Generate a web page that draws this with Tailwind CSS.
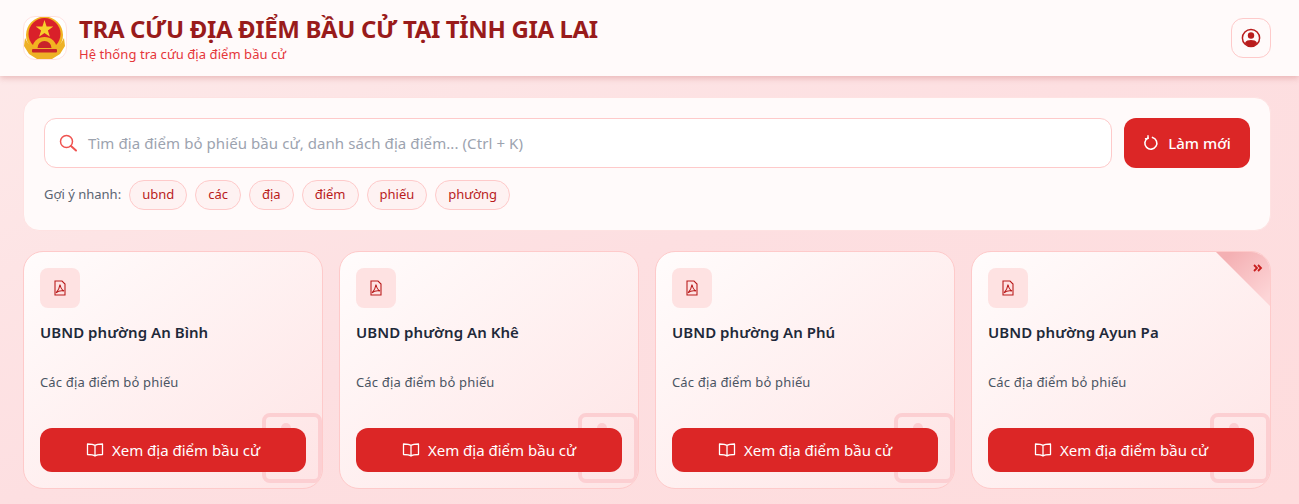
<!DOCTYPE html>
<html lang="vi">
<head>
<meta charset="utf-8">
<script src="https://cdn.jsdelivr.net/npm/@tailwindcss/browser@4"></script>
</head>
<body class="h-[504px] w-[1299px] overflow-hidden bg-gradient-to-br from-[#fdeaea] via-[#fddfe1] to-[#fedcdd] font-['Noto_Sans','Open_Sans',sans-serif] text-gray-800">
<header class="relative z-10 flex h-[76px] items-center justify-between bg-[#fffafa] px-[23px] pr-[28px] shadow-[0_2px_6px_rgba(180,60,60,0.28)]">
  <div class="flex items-center gap-3">
    <div class="flex h-11 w-11 items-center justify-center overflow-hidden rounded-xl border border-red-100 bg-white">
      <svg viewBox="0 0 44 44" class="h-11 w-11 shrink-0">
        <circle cx="21.500" cy="19" r="18.500" fill="#f2b321"/>
        <circle cx="21.500" cy="18" r="16" fill="#d9202a"/>
        <polygon points="21.500,4 23.600,10.400 30.300,10.400 24.900,14.400 26.900,20.800 21.500,16.900 16.100,20.800 18.100,14.400 12.700,10.400 19.400,10.400" fill="#f8d02c"/>
        <path d="M9.500 32a12 11 0 0 1 24 0z" fill="#f2b321"/>
        <path d="M14.500 32a7 7 0 0 1 14 0z" fill="#c9222a"/>
        <path d="M2 22c3 6 6 9 11 10h17c5-1 8-4 11-10l1 8-5 8-8 5H14l-8-5-5-8z" fill="#eeb126"/>
        <rect x="9" y="33" width="25" height="3.500" rx="1" fill="#c9222a"/>
      </svg>
    </div>
    <div class="pt-[2px]">
      <h1 class="text-[24px] font-bold leading-[30px] tracking-[-0.35px] text-[#991b1b]">TRA CỨU ĐỊA ĐIỂM BẦU CỬ TẠI TỈNH GIA LAI</h1>
      <p class="text-[13px] leading-[20px] tracking-[0.06px] text-[#e5363a]">Hệ thống tra cứu địa điểm bầu cử</p>
    </div>
  </div>
  <button class="flex h-10 w-10 items-center justify-center rounded-xl border border-[#fecaca] bg-[#fffafa]">
    <svg viewBox="0 0 20 20" class="h-[20px] w-[20px]">
      <circle cx="10" cy="10" r="8.600" fill="none" stroke="#b91c1c" stroke-width="1.500"/>
      <circle cx="10" cy="7.500" r="3.200" fill="#b91c1c"/>
      <path d="M3.700 15.200C5 12.600 7.500 12 10 12s5 .6 6.300 3.200A8.500 8.500 0 0 1 10 18.600a8.500 8.500 0 0 1-6.300-3.400z" fill="#b91c1c"/>
    </svg>
  </button>
</header>

<main class="flex flex-col gap-[20px] pl-[23px] pr-[28px] pt-[21px]">
  <section class="rounded-2xl border border-[#fee2e2] bg-[#fffafa] p-5">
    <div class="flex gap-3">
      <div class="flex h-[50px] flex-1 items-center gap-[10px] rounded-xl border border-[#fecaca] bg-white pl-[13px]">
        <svg viewBox="0 0 20 20" class="h-[20px] w-[20px] fill-none stroke-[#ef5350]" stroke-width="1.500" stroke-linecap="round">
          <circle cx="8.500" cy="8.500" r="6"/>
          <path d="M13 13l5 4.500" stroke-width="2"/>
        </svg>
        <span class="text-[15px] tracking-[0.08px] text-[#9ca3af]">Tìm địa điểm bỏ phiếu bầu cử, danh sách địa điểm... (Ctrl + K)</span>
      </div>
      <button class="flex h-[50px] w-[126px] items-center justify-center gap-[9px] rounded-xl bg-[#dc2626] text-[15px] font-medium text-white">
        <svg viewBox="0 0 16 16" class="h-4 w-4 fill-none stroke-white" stroke-width="1.600" stroke-linecap="round">
          <path d="M9.500 2.400A6 6 0 1 1 4.800 3"/>
          <path d="M5 .8l.1 2.600-2.600.3" stroke-width="1.400"/>
        </svg>
        <span>Làm mới</span>
      </button>
    </div>
    <div class="mt-3 flex items-center gap-2 text-[13px]">
      <span class="text-[#5b6472]">Gợi ý nhanh:</span>
      <span class="flex h-[30px] items-center rounded-full border border-[#fecaca] bg-[#fef2f2] px-[12px] text-[#b91c1c]">ubnd</span>
      <span class="flex h-[30px] items-center rounded-full border border-[#fecaca] bg-[#fef2f2] px-[12px] text-[#b91c1c]">các</span>
      <span class="flex h-[30px] items-center rounded-full border border-[#fecaca] bg-[#fef2f2] px-[12px] text-[#b91c1c]">địa</span>
      <span class="flex h-[30px] items-center rounded-full border border-[#fecaca] bg-[#fef2f2] px-[12px] text-[#b91c1c]">điểm</span>
      <span class="flex h-[30px] items-center rounded-full border border-[#fecaca] bg-[#fef2f2] px-[12px] text-[#b91c1c]">phiếu</span>
      <span class="flex h-[30px] items-center rounded-full border border-[#fecaca] bg-[#fef2f2] px-[12px] text-[#b91c1c]">phường</span>
    </div>
  </section>

  <section class="grid w-[1248px] grid-cols-4 gap-4">
    <article class="relative flex h-[238px] flex-col overflow-hidden rounded-[20px] border border-[#fecaca] bg-gradient-to-br from-[#fffcfc] to-[#fee4e5] p-4">
      <svg viewBox="0 0 60 72" class="absolute bottom-[4px] right-0 h-[72px] w-[60px] fill-none stroke-[#fccfd2]" stroke-width="4"><rect x="2" y="3" width="56" height="66" rx="6"/><circle cx="24" cy="16" r="5" fill="#fccfd2" stroke="none"/></svg>
      <div class="flex h-10 w-10 items-center justify-center rounded-lg bg-[#fee2e2]">
        <svg viewBox="0 0 16 16" class="h-4 w-4 fill-none stroke-[#b91c1c]" stroke-width="1.100"><path d="M3 1h7l3 3v11H3z"/><path d="M8 4.500c.6 3 2 5.500 4 6.500-2.500-.5-5.500-.3-8 1.800 2-2 3.600-5 4-8.300z"/></svg>
      </div>
      <h3 class="relative mt-[14px] text-[15px] font-semibold leading-[20px] tracking-[0.05px] text-gray-800">UBND phường An Bình</h3>
      <p class="relative mt-[31px] text-[13px] leading-[18px] tracking-[0.15px] text-[#4b5563]">Các địa điểm bỏ phiếu</p>
      <button class="relative mt-auto flex h-11 w-full items-center justify-center gap-2 rounded-xl bg-[#dc2626] text-[15px] font-normal text-white">
        <svg viewBox="0 0 18 18" class="h-[18px] w-[18px] fill-none stroke-white" stroke-width="1.300" stroke-linejoin="round"><path d="M9 4.500C7.500 3.300 5 3 1.500 3v10.500c3.500 0 6 .3 7.500 1.500 1.500-1.200 4-1.500 7.500-1.500V3C13 3 10.500 3.300 9 4.500zM9 4.500V15"/></svg>
        <span>Xem địa điểm bầu cử</span>
      </button>
    </article>
    <article class="relative flex h-[238px] flex-col overflow-hidden rounded-[20px] border border-[#fecaca] bg-gradient-to-br from-[#fffcfc] to-[#fee4e5] p-4">
      <svg viewBox="0 0 60 72" class="absolute bottom-[4px] right-0 h-[72px] w-[60px] fill-none stroke-[#fccfd2]" stroke-width="4"><rect x="2" y="3" width="56" height="66" rx="6"/><circle cx="24" cy="16" r="5" fill="#fccfd2" stroke="none"/></svg>
      <div class="flex h-10 w-10 items-center justify-center rounded-lg bg-[#fee2e2]">
        <svg viewBox="0 0 16 16" class="h-4 w-4 fill-none stroke-[#b91c1c]" stroke-width="1.100"><path d="M3 1h7l3 3v11H3z"/><path d="M8 4.500c.6 3 2 5.500 4 6.500-2.500-.5-5.500-.3-8 1.800 2-2 3.600-5 4-8.300z"/></svg>
      </div>
      <h3 class="relative mt-[14px] text-[15px] font-semibold leading-[20px] tracking-[0.05px] text-gray-800">UBND phường An Khê</h3>
      <p class="relative mt-[31px] text-[13px] leading-[18px] tracking-[0.15px] text-[#4b5563]">Các địa điểm bỏ phiếu</p>
      <button class="relative mt-auto flex h-11 w-full items-center justify-center gap-2 rounded-xl bg-[#dc2626] text-[15px] font-normal text-white">
        <svg viewBox="0 0 18 18" class="h-[18px] w-[18px] fill-none stroke-white" stroke-width="1.300" stroke-linejoin="round"><path d="M9 4.500C7.500 3.300 5 3 1.500 3v10.500c3.500 0 6 .3 7.500 1.500 1.500-1.200 4-1.500 7.500-1.500V3C13 3 10.500 3.300 9 4.500zM9 4.500V15"/></svg>
        <span>Xem địa điểm bầu cử</span>
      </button>
    </article>
    <article class="relative flex h-[238px] flex-col overflow-hidden rounded-[20px] border border-[#fecaca] bg-gradient-to-br from-[#fffcfc] to-[#fee4e5] p-4">
      <svg viewBox="0 0 60 72" class="absolute bottom-[4px] right-0 h-[72px] w-[60px] fill-none stroke-[#fccfd2]" stroke-width="4"><rect x="2" y="3" width="56" height="66" rx="6"/><circle cx="24" cy="16" r="5" fill="#fccfd2" stroke="none"/></svg>
      <div class="flex h-10 w-10 items-center justify-center rounded-lg bg-[#fee2e2]">
        <svg viewBox="0 0 16 16" class="h-4 w-4 fill-none stroke-[#b91c1c]" stroke-width="1.100"><path d="M3 1h7l3 3v11H3z"/><path d="M8 4.500c.6 3 2 5.500 4 6.500-2.500-.5-5.500-.3-8 1.800 2-2 3.600-5 4-8.300z"/></svg>
      </div>
      <h3 class="relative mt-[14px] text-[15px] font-semibold leading-[20px] tracking-[0.05px] text-gray-800">UBND phường An Phú</h3>
      <p class="relative mt-[31px] text-[13px] leading-[18px] tracking-[0.15px] text-[#4b5563]">Các địa điểm bỏ phiếu</p>
      <button class="relative mt-auto flex h-11 w-full items-center justify-center gap-2 rounded-xl bg-[#dc2626] text-[15px] font-normal text-white">
        <svg viewBox="0 0 18 18" class="h-[18px] w-[18px] fill-none stroke-white" stroke-width="1.300" stroke-linejoin="round"><path d="M9 4.500C7.500 3.300 5 3 1.500 3v10.500c3.500 0 6 .3 7.500 1.500 1.500-1.200 4-1.500 7.500-1.500V3C13 3 10.500 3.300 9 4.500zM9 4.500V15"/></svg>
        <span>Xem địa điểm bầu cử</span>
      </button>
    </article>
    <article class="relative flex h-[238px] flex-col overflow-hidden rounded-[20px] border border-[#fecaca] bg-gradient-to-br from-[#fffcfc] to-[#fee4e5] p-4">
      <svg viewBox="0 0 60 72" class="absolute bottom-[4px] right-0 h-[72px] w-[60px] fill-none stroke-[#fccfd2]" stroke-width="4"><rect x="2" y="3" width="56" height="66" rx="6"/><circle cx="24" cy="16" r="5" fill="#fccfd2" stroke="none"/></svg>
      <svg viewBox="0 0 54 54" class="absolute right-0 top-0 h-[54px] w-[54px]"><defs><linearGradient id="c" x1="0.300" y1="0" x2="1" y2="0.800"><stop offset="0" stop-color="#f4b0b3"/><stop offset="1" stop-color="#fdd5d7"/></linearGradient></defs><polygon points="0,0 54,0 54,54" fill="url(#c)"/><path d="M38 13l3 3-3 3M42 13l3 3-3 3" fill="none" stroke="#c81e1e" stroke-width="1.800"/></svg>
      <div class="flex h-10 w-10 items-center justify-center rounded-lg bg-[#fee2e2]">
        <svg viewBox="0 0 16 16" class="h-4 w-4 fill-none stroke-[#b91c1c]" stroke-width="1.100"><path d="M3 1h7l3 3v11H3z"/><path d="M8 4.500c.6 3 2 5.500 4 6.500-2.500-.5-5.500-.3-8 1.800 2-2 3.600-5 4-8.300z"/></svg>
      </div>
      <h3 class="relative mt-[14px] text-[15px] font-semibold leading-[20px] tracking-[0.05px] text-gray-800">UBND phường Ayun Pa</h3>
      <p class="relative mt-[31px] text-[13px] leading-[18px] tracking-[0.15px] text-[#4b5563]">Các địa điểm bỏ phiếu</p>
      <button class="relative mt-auto flex h-11 w-full items-center justify-center gap-2 rounded-xl bg-[#dc2626] text-[15px] font-normal text-white">
        <svg viewBox="0 0 18 18" class="h-[18px] w-[18px] fill-none stroke-white" stroke-width="1.300" stroke-linejoin="round"><path d="M9 4.500C7.500 3.300 5 3 1.500 3v10.500c3.500 0 6 .3 7.500 1.500 1.500-1.200 4-1.500 7.500-1.500V3C13 3 10.500 3.300 9 4.500zM9 4.500V15"/></svg>
        <span>Xem địa điểm bầu cử</span>
      </button>
    </article>
  </section>
</main>
</body>
</html>
